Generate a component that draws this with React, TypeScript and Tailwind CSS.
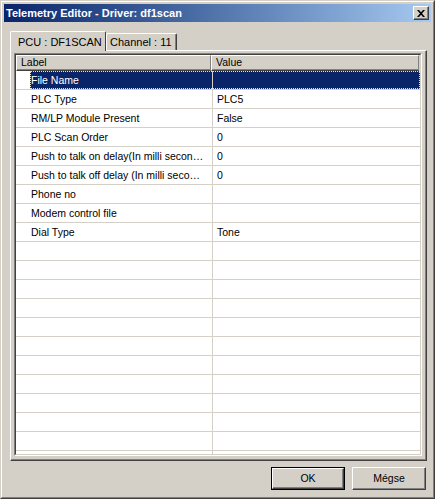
import React from 'react';

interface Row {
  label: string;
  value: string;
}

const rows: Row[] = [
  { label: 'File Name', value: '' },
  { label: 'PLC Type', value: 'PLC5' },
  { label: 'RM/LP Module Present', value: 'False' },
  { label: 'PLC Scan Order', value: '0' },
  { label: 'Push to talk on delay(In milli secon…', value: '0' },
  { label: 'Push to talk off delay (In milli seco…', value: '0' },
  { label: 'Phone no', value: '' },
  { label: 'Modem control file', value: '' },
  { label: 'Dial Type', value: 'Tone' },
];

const blanks = Array.from({ length: 13 }, () => ({ label: '', value: '' }));

function CloseGlyph() {
  return (
    <svg width="8" height="7" viewBox="0 0 8 7">
      <path d="M0 0h2l2 2.3L6 0h2L5 3.5 8 7H6L4 4.7 2 7H0l3-3.5z" fill="#000" />
    </svg>
  );
}

function Button({ label, isDefault = false }: { label: string; isDefault?: boolean }) {
  const inner = (
    <div className="flex-1 flex items-center justify-center border border-t-white border-l-white border-b-[#404040] border-r-[#404040] shadow-[inset_-1px_-1px_0_#808080] text-[10.5px] text-black">
      {label}
    </div>
  );
  if (isDefault) {
    return <div className="w-[74px] h-[23px] flex border border-black">{inner}</div>;
  }
  return <div className="w-[74px] h-[23px] flex">{inner}</div>;
}

export default function App() {
  const all = [...rows, ...blanks];

  return (
    <div className="w-[435px] h-[499px] bg-[#d4d0c8] border border-t-[#d4d0c8] border-l-[#d4d0c8] border-b-[#404040] border-r-[#404040] font-['Liberation_Sans',Arial,sans-serif] select-none">
      <div className="h-full border border-t-white border-l-white border-b-[#808080] border-r-[#808080] p-[2px] flex flex-col">
        {/* title bar */}
        <div className="h-[18px] flex items-center bg-linear-to-r from-[#0a246a] to-[#a6caf0]">
          <span className="pl-[2px] pt-px text-[11px] font-bold text-white flex-1 leading-none">
            Telemetry Editor - Driver: df1scan
          </span>
          <div className="w-[16px] h-[14px] mr-[2px] flex items-center justify-center bg-[#d4d0c8] border border-t-white border-l-white border-b-[#404040] border-r-[#404040] shadow-[inset_-1px_-1px_0_#808080]">
            <CloseGlyph />
          </div>
        </div>

        {/* tabs */}
        <div className="mt-[9px] pl-[6px] flex items-end h-[19px]">
          <div className="relative z-10 h-[20px] w-[96px] -mb-px bg-[#d4d0c8] border-t border-l border-r border-t-white border-l-white border-r-[#404040] rounded-t-[2px] pl-[7px] pt-px flex items-center text-[11px] text-black">
            PCU : DF1SCAN
          </div>
          <div className="h-[17px] w-[71px] bg-[#d4d0c8] border-t border-l border-r border-t-white border-l-white border-r-[#404040] shadow-[inset_-1px_0_0_#808080] rounded-t-[2px] pl-[3px] pt-px flex items-center text-[11px] text-black">
            Channel : 11
          </div>
        </div>

        {/* tab panel */}
        <div className="ml-[6px] w-[417px] h-[411px] border border-t-white border-l-white border-b-[#404040] border-r-[#404040] shadow-[inset_-1px_-1px_0_#808080] pt-[2px] pl-[3px]">
          <div className="w-[408px] h-[403px] border border-t-[#808080] border-l-[#808080] border-b-white border-r-white">
            <div className="h-full border border-t-[#404040] border-l-[#404040] border-b-[#d4d0c8] border-r-[#d4d0c8] bg-white overflow-hidden flex flex-col">
              {/* header */}
              <div className="h-[16px] flex shrink-0 bg-[#d4d0c8] text-[10.5px] text-black">
                <div className="w-[195px] border-t border-l border-b border-r border-t-white border-l-white border-b-[#404040] border-r-[#808080] shadow-[inset_0_-1px_0_#808080] pl-[4px] flex items-center">
                  Label
                </div>
                <div className="w-[208px] border-t border-l border-b border-r border-t-white border-l-white border-b-[#404040] border-r-[#808080] shadow-[inset_0_-1px_0_#808080] pl-[4px] flex items-center">
                  Value
                </div>
              </div>

              {/* rows */}
              {all.map((r, i) => {
                const selected = i === 0;
                return (
                  <div key={i} className="h-[19px] shrink-0 flex border-b border-[#d4d0c8] text-[10.5px]">
                    <div className="w-[14px] shrink-0" />
                    <div
                      className={
                        selected
                          ? 'flex-1 flex bg-[#0a246a] text-white outline-1 outline-dotted outline-[#e8e4d8] -outline-offset-1'
                          : 'flex-1 flex text-black'
                      }
                    >
                      <div className="w-[183px] shrink-0 border-r border-[#d4d0c8] pl-px pt-px flex items-center whitespace-nowrap overflow-hidden">
                        {r.label}
                      </div>
                      <div className="flex-1 pl-[4px] pt-px flex items-center">{r.value}</div>
                    </div>
                  </div>
                );
              })}
            </div>
          </div>
        </div>

        {/* buttons */}
        <div className="mt-[6px] flex justify-end gap-[7px] pr-[5px]">
          <Button label="OK" isDefault />
          <Button label="Mégse" />
        </div>
      </div>
    </div>
  );
}
